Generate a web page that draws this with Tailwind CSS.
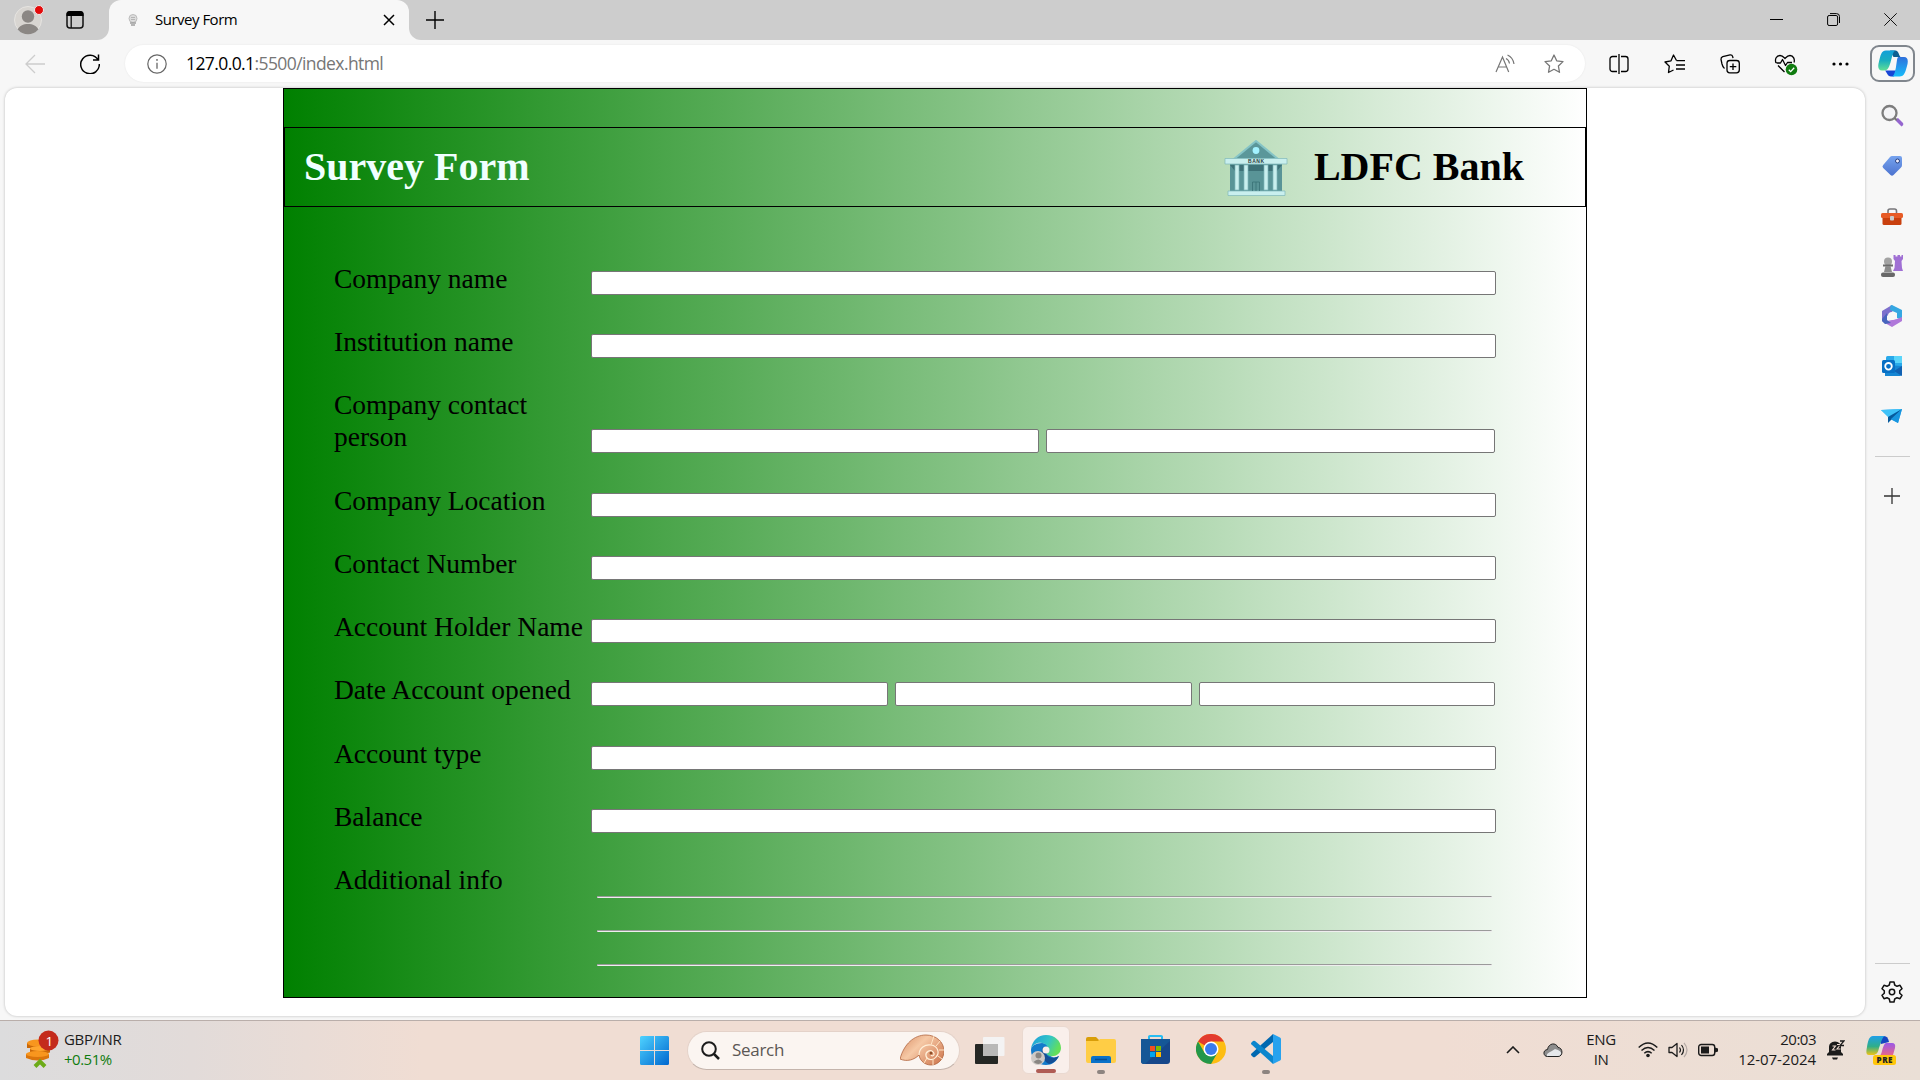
<!DOCTYPE html>
<html lang="en">
<head>
<meta charset="utf-8">
<title>Survey Form</title>
<script src="https://cdn.jsdelivr.net/npm/@tailwindcss/browser@4"></script>
</head>
<body class="w-[1920px] h-[1080px] overflow-hidden flex flex-col bg-[#f7f7f7] font-['Open_Sans',sans-serif] text-black">

<!-- Tab strip -->
<header class="h-10 shrink-0 bg-[#cdcdcd] flex items-stretch">
  <div class="w-[109px] flex items-center bg-[#f7f7f7]">
    <div class="h-10 w-full bg-[#cdcdcd] rounded-br-[12px] flex items-center pl-3.5">
      <svg class="w-8 h-8" viewBox="0 0 32 32"><circle cx="14" cy="16" r="13.5" fill="#d8d5d1" stroke="#e6e4e1"/><circle cx="14" cy="12.5" r="6.2" fill="#8b8784"/><path d="M3.7 25.5C6 18 22 18 24.300 25.500A13.500 13.500 0 0 1 3.700 25.500z" fill="#8b8784"/><circle cx="25" cy="6" r="4.500" fill="#e30b0b" stroke="#efe9e9"/></svg>
      <svg class="w-5 h-5 ml-[19px]" viewBox="0 0 20 20"><rect x="2" y="2" width="16" height="16" rx="3" fill="none" stroke="#111" stroke-width="1.5"/><path d="M1.500 6V4a3 3 0 0 1 3-3h11a3 3 0 0 1 3 3v2z" fill="#000"/><path d="M6.200 6v12" stroke="#111" stroke-width="1.300"/></svg>
    </div>
  </div>
  <div class="w-[300px] bg-[#cdcdcd]">
    <div class="h-10 w-full bg-[#f7f7f7] rounded-t-[12px] flex items-center pl-[19px] pr-[14px]">
      <svg class="w-[10px] h-3" viewBox="0 0 10 12"><circle cx="5" cy="4.500" r="4" fill="#ddd" stroke="#bcbcbc"/><path d="M3 3.500h4M3 5.500h4" stroke="#b5b5b5"/><path d="M2 9h6M3 11h4" stroke="#a0a0a0" stroke-width="1.300"/></svg>
      <span class="ml-[17px] pb-0.5 text-[15px] leading-5 tracking-[-0.5px] grow">Survey Form</span>
      <svg class="w-3 h-3" viewBox="0 0 12 12"><path d="M1 1l10 10M11 1L1 11" stroke="#000" stroke-width="1.500"/></svg>
    </div>
  </div>
  <div class="grow bg-[#f7f7f7]">
    <div class="h-10 w-full bg-[#cdcdcd] rounded-bl-[12px] flex items-center justify-between pl-[17px] pr-[23px] pb-px">
      <svg class="w-[18px] h-[18px]" viewBox="0 0 18 18"><path d="M9 0v18M0 9h18" stroke="#000" stroke-width="1.400"/></svg>
      <div class="flex items-center gap-11">
        <svg class="w-[13px] h-[13px]" viewBox="0 0 13 13"><path d="M0 6.500h13" stroke="#000"/></svg>
        <svg class="w-[13px] h-[13px]" viewBox="0 0 13 13"><rect x=".6" y="2.500" width="10" height="10" rx="1.500" fill="none" stroke="#000"/><path d="M3 .6h6.500a3 3 0 0 1 3 3V10" fill="none" stroke="#000"/></svg>
        <svg class="w-[13px] h-[13px]" viewBox="0 0 13 13"><path d="M.3.300l12.400 12.400M12.700.300L.300 12.700" stroke="#111"/></svg>
      </div>
    </div>
  </div>
</header>

<!-- Address bar -->
<nav class="h-12 shrink-0 flex items-center pl-[25px] pr-[5px] pb-px">
  <svg class="w-5 h-5" viewBox="0 0 20 20"><path d="M20 10H1M10 1L1 10l9 9" fill="none" stroke="#cdcdcd" stroke-width="1.300"/></svg>
  <svg class="w-5 h-5 ml-[35px]" viewBox="0 0 20 20"><path d="M18 5.700A9.300 9.300 0 1 0 19.300 10M18.500.500v5.500H13" fill="none" stroke="#000" stroke-width="1.500"/></svg>
  <div class="ml-[25px] w-[1460px] h-[37px] rounded-full bg-white flex items-center pl-[22px] pr-[21px] shadow-[0_0_2px_rgba(0,0,0,0.08)]">
    <svg class="w-5 h-5" viewBox="0 0 20 20"><circle cx="10" cy="10" r="9.200" fill="none" stroke="#666" stroke-width="1.200"/><path d="M10 8.700v6" stroke="#666" stroke-width="1.300"/><circle cx="10" cy="5.900" r=".9" fill="#666"/></svg>
    <span class="ml-[19px] pb-px text-[17.500px] leading-6 tracking-[-0.59px] grow text-[#767676]"><span class="text-black">127.0.0.1</span>:5500/index.html</span>
    <svg class="w-5 h-5" viewBox="0 0 20 20"><path d="M1 18L7.500 3l6.200 15M3.300 13h8.500" fill="none" stroke="#767676" stroke-width="1.200"/><path d="M11 4.500q3 1.500 3.500 5M12.500 1q5.500 2.500 6.500 9" fill="none" stroke="#767676" stroke-width="1.200"/></svg>
    <svg class="w-5 h-5 ml-[29px]" viewBox="0 0 20 20"><path d="M10 1l2.700 5.800 6.300.8-4.600 4.400 1.100 6.300L10 15.300l-5.500 3 1.100-6.300L1 7.600l6.300-.8z" fill="none" stroke="#767676" stroke-width="1.300" stroke-linejoin="round"/></svg>
  </div>
  <svg class="w-5 h-5 ml-[24px]" viewBox="0 0 20 20"><path d="M8 2.500H3.500a2.500 2.500 0 0 0-2.500 2.500v10a2.500 2.500 0 0 0 2.500 2.500H8M12 2.500h4.500a2.500 2.500 0 0 1 2.500 2.500v10a2.500 2.500 0 0 1-2.500 2.500H12M10 0v20" fill="none" stroke="#000" stroke-width="1.300"/></svg>
  <svg class="w-[21px] h-5 ml-[35px]" viewBox="0 0 21 20"><path d="M12.500 6.500L9.500 1 7 6.800 1 8l4.300 4.200L4.500 18.500l5-2.500M12.500 6.700H21M12 11h9M12 15h9" fill="none" stroke="#000" stroke-width="1.300" stroke-linejoin="round"/></svg>
  <svg class="w-5 h-5 ml-[35px]" viewBox="0 0 20 20"><rect x="7" y="6.500" width="12.300" height="12.300" rx="2.800" fill="none" stroke="#000" stroke-width="1.300"/><path d="M13 9.500v6.500M9.800 12.700h6.500M4.500 14.500C3 13.500 2.500 12 2 10L1 5.500Q.800 3.500 2.800 2.700L10 .9q2.200-.2 2.700 1.700l.3 1.500" fill="none" stroke="#000" stroke-width="1.300"/></svg>
  <svg class="w-6 h-5 ml-[34px] overflow-visible" viewBox="0 0 24 20"><path d="M2 9C.500 5 2.500 1.500 6 1.500c2.500 0 4 2 5 3 1-1 2.500-3 5-3 3.500 0 5 4 4 7M2.500 9h4l2-3.500 3 6 2-3h4.500M4 11.500l6.500 6.500" fill="none" stroke="#000" stroke-width="1.300" stroke-linejoin="round"/><circle cx="17.500" cy="15.500" r="5.800" fill="#107c10"/><path d="M14.800 15.700l1.900 1.900 3.500-3.800" fill="none" stroke="#fff" stroke-width="1.300"/></svg>
  <svg class="w-[17px] h-5 ml-[34px]" viewBox="0 0 17 20"><g fill="#000"><circle cx="2" cy="10" r="1.600"/><circle cx="8.500" cy="10" r="1.600"/><circle cx="15" cy="10" r="1.600"/></g></svg>
  <div class="ml-auto w-[45px] h-[37px] rounded-[9px] border-2 border-[#80868d] flex items-center justify-center">
    <svg class="w-[30px] h-[27px]" viewBox="0 0 30 27"><defs><linearGradient id="cl" x1="0" y1="0" x2="0" y2="1"><stop stop-color="#119fd9"/><stop offset=".5" stop-color="#19aebf"/><stop offset="1" stop-color="#60df95"/></linearGradient><linearGradient id="cr" x1="0" y1="0" x2="0" y2="1"><stop stop-color="#2f70db"/><stop offset="1" stop-color="#18bdfb"/></linearGradient></defs><path d="M7 20.500h12l-3 6h-3c-3 0-3.500-3-6-6z" fill="#1746d5"/><path d="M12 .5h5.500c3 0 3 4 5 6.500h-7z" fill="#0d5f91"/><path d="M8 .5h9.500c-2.500 1-3 5-4.500 10-1.500 6-3 10-6.500 10H4c-4 0-4.500-4-3-9C2.500 6 3 .5 8 .5z" fill="url(#cl)"/><path d="M20.500 7H26c4 0 4.500 4 3 9-1.500 5.500-2.500 10.500-7.500 10.500H14c2.500-1 3-5 4-9.500C19 11 19 7 20.500 7z" fill="url(#cr)"/></svg>
  </div>
</nav>

<div class="h-[932px] shrink-0 flex pl-[5px]">
  <!-- Page viewport -->
  <main class="w-[1860px] h-[928px] rounded-[12px] bg-white shadow-[0_0_3px_rgba(0,0,0,0.25)] pl-[278px]">
    <form class="w-[1304px] h-[910px] border border-black bg-[linear-gradient(to_right,#008000,#ffffff)] font-['Liberation_Serif',serif]">
      <div class="mt-[38px] h-20 border border-black flex items-center pl-[19px] pr-[61px] text-[40px] font-bold leading-none">
        <h1 class="text-[#f0ffff] grow">Survey Form</h1>
        <svg class="w-16 h-14 mt-px" viewBox="0 0 64 56"><path d="M10 19L32 1l22 18z" fill="#5b979a" stroke="#85c4c6" stroke-width="2"/><circle cx="32" cy="10.500" r="3.400" fill="#a3f2ff"/><path d="M6 24h52v28H6z" fill="#599497"/><path d="M6 25h52l-5 6H11z" fill="#3d7177"/><g fill="#c9efee" stroke="#80b8ba" stroke-width=".7"><path d="M11 25h4v25h-4zM20 25h4v25h-4zM40 25h4v25h-4zM49 25h4v25h-4z"/><path d="M1 18.500h62V24H1z"/><path d="M4 51h57v4.500H4z"/></g><path d="M28.500 51V42h7v9M32 42v9" fill="none" stroke="#397176" stroke-width=".8"/><text x="24" y="23.200" font-family="Liberation Sans, sans-serif" font-size="5" font-weight="bold" textLength="16" fill="#293c40">BANK</text></svg>
        <h2 class="ml-[26px]">LDFC Bank</h2>
      </div>
      <div class="mt-14 ml-[50px] w-[1162px] grid grid-cols-[257px_905px] grid-rows-[63px_63px_96px_63px_63px_63px_64px_63px_63px_100px] text-[27.500px] leading-8">
        <label>Company name</label><div class="pt-2"><input class="block w-full h-6 bg-white border border-[#767676] rounded-[2px]"></div>
        <label>Institution name</label><div class="pt-2"><input class="block w-full h-6 bg-white border border-[#767676] rounded-[2px]"></div>
        <label>Company contact<br>person</label><div class="pt-10 flex gap-[7px] pr-px"><input class="w-[448px] h-6 bg-white border border-[#767676] rounded-[2px]"><input class="w-[449px] h-6 bg-white border border-[#767676] rounded-[2px]"></div>
        <label>Company Location</label><div class="pt-2"><input class="block w-full h-6 bg-white border border-[#767676] rounded-[2px]"></div>
        <label>Contact Number</label><div class="pt-2"><input class="block w-full h-6 bg-white border border-[#767676] rounded-[2px]"></div>
        <label>Account Holder Name</label><div class="pt-2"><input class="block w-full h-6 bg-white border border-[#767676] rounded-[2px]"></div>
        <label>Date Account opened</label><div class="pt-2 flex gap-[7px] pr-px"><input class="w-[297px] h-6 bg-white border border-[#767676] rounded-[2px]"><input class="w-[297px] h-6 bg-white border border-[#767676] rounded-[2px]"><input class="w-[296px] h-6 bg-white border border-[#767676] rounded-[2px]"></div>
        <label>Account type</label><div class="pt-2"><input class="block w-full h-6 bg-white border border-[#767676] rounded-[2px]"></div>
        <label>Balance</label><div class="pt-2"><input class="block w-full h-6 bg-white border border-[#767676] rounded-[2px]"></div>
        <label>Additional info</label>
        <div class="pt-8 pl-1.5 pr-1 flex flex-col gap-8">
          <hr class="h-0.5 border border-t-[#9a9a9a] border-l-[#9a9a9a] border-b-[#eeeeee] border-r-[#eeeeee]">
          <hr class="h-0.5 border border-t-[#9a9a9a] border-l-[#9a9a9a] border-b-[#eeeeee] border-r-[#eeeeee]">
          <hr class="h-0.5 border border-t-[#9a9a9a] border-l-[#9a9a9a] border-b-[#eeeeee] border-r-[#eeeeee]">
        </div>
      </div>
    </form>
  </main>

  <!-- Sidebar -->
  <aside class="grow flex flex-col items-center pt-4 pr-px">
    <div class="flex flex-col items-center gap-[26px]">
      <svg class="w-6 h-6" viewBox="0 0 24 24"><path d="M16 15l2-1 5 5q1 2-1.500 3.500L16 17z" fill="#9566cf"/><circle cx="9.500" cy="9" r="7" fill="#f4f4f6" stroke="#7d7d7d" stroke-width="2.300"/><path d="M14.500 14l2.200 2.200" stroke="#777" stroke-width="2"/></svg>
      <svg class="w-6 h-6" viewBox="0 0 24 24"><defs><linearGradient id="tg" x1="0" y1="0" x2="0" y2="1"><stop stop-color="#76a3ee"/><stop offset="1" stop-color="#4c73cf"/></linearGradient></defs><path d="M12 2h8q2 0 2 2v7q0 1.500-1 2.500l-7.500 7.500q-1.500 1.500-3 0l-7.300-7q-1.500-1.500 0-3L10 3q1-1 2-1z" fill="url(#tg)"/><circle cx="17.500" cy="7" r="2" fill="#eef" stroke="#27407e"/></svg>
      <svg class="w-6 h-6" viewBox="0 0 24 24"><path d="M8 10V7q0-2 2-2h4.500q2 0 2 2v3" fill="none" stroke="#77767a" stroke-width="1.600"/><rect x="1" y="9" width="22" height="5" rx="1.500" fill="#e75b26"/><path d="M2.500 14h19v5.500q0 1.500-1.500 1.500H4q-1.500 0-1.500-1.500z" fill="#c9400e"/><rect x="10" y="12" width="4" height="4.500" rx="1" fill="#cbcbcb"/></svg>
      <svg class="w-6 h-6" viewBox="0 0 24 24"><path d="M13.500 1h2v1.500h2V1h2.500v1.500h1.500V1H23v4l-1.500 2 .5 7 1 3h-10l1.500-3 .5-7-1.500-2z" fill="#a070d4"/><circle cx="8" cy="7.500" r="4" fill="#a3a3a3"/><path d="M3 10.500h10v2H3z" fill="#6c6c6c"/><path d="M5.500 12h5l1.500 6H4z" fill="#8b8b8b"/><rect x="1" y="18.500" width="14" height="4.500" rx="2" fill="#686868"/></svg>
      <svg class="w-6 h-6" viewBox="0 0 24 24"><path d="M12 1L2 7v10l4 3 1-8 7-6z" fill="#7d70cd"/><path d="M12 1l10 5v10l-5-2V9l-7-3 .5-4.500z" fill="#35a7e2"/><path d="M22 13v4l-10 6-8-4.500 3-1.500 10-2z" fill="#b078da"/><path d="M2 15v2l3 3 6-1-4-3V9z" fill="#4865bd"/><circle cx="12" cy="12" r="4" fill="#f7f7f7"/></svg>
      <svg class="w-6 h-6" viewBox="0 0 24 24"><rect x="6" y="2" width="16" height="12" rx="1.500" fill="#29a9ea"/><path d="M14 2h8v7h-8z" fill="#5ad5fa"/><path d="M5 11l17 1v8q0 2-2 2H5z" fill="#1686d3"/><path d="M22 12l-8 5 8 5z" fill="#1161b2"/><rect x="2" y="6" width="13" height="13" rx="1.500" fill="#0870c5"/><circle cx="8.500" cy="12.300" r="3.300" fill="none" stroke="#fff" stroke-width="1.800"/></svg>
      <svg class="w-6 h-6" viewBox="0 0 24 24"><path d="M1 6l21-1-4 14-6-3z" fill="#26a6ee"/><path d="M1 6l21-1-14 8z" fill="#3fc2f8"/><path d="M22 5L8 13v6l3.500-3.500z" fill="#075a9c"/><path d="M22 5L11 15l7 4z" fill="#1895df"/></svg>
    </div>
    <div class="mt-7 w-[35px] h-px bg-[#cccccc]"></div>
    <svg class="mt-[31px] w-4 h-4" viewBox="0 0 16 16"><path d="M8 0v16M0 8h16" stroke="#333" stroke-width="1.300"/></svg>
    <div class="mt-auto w-[35px] h-px bg-[#cccccc]"></div>
    <svg class="mt-[17px] mb-[17px] w-[22px] h-[22px]" viewBox="0 0 22 22"><path d="M9 1h4l.7 3 2.300 1.300 3-1 2 3.400-2.300 2v2.600l2.300 2-2 3.400-3-1-2.300 1.300-.7 3H9l-.7-3L6 16.700l-3 1-2-3.400 2.300-2V9.700l-2.300-2L3 4.300l3 1L8.300 4z" fill="none" stroke="#111" stroke-width="1.500" stroke-linejoin="round"/><circle cx="11" cy="11" r="2.700" fill="none" stroke="#111" stroke-width="1.500"/></svg>
  </aside>
</div>

<!-- Taskbar -->
<footer class="h-[60px] shrink-0 border-t border-[#b9aeaa] bg-[linear-gradient(to_right,#dcdcdd,#e2dbd9_10%,#f0ddd3_22%,#f0ddd3_75%,#eadfd6)] flex items-center pb-px">
  <div class="w-[627px] flex items-center pl-[25px]">
    <svg class="w-9 h-10" viewBox="0 0 36 40"><path d="M2 13h22v5H2z" fill="#ca6808"/><ellipse cx="13" cy="13" rx="11" ry="3.500" fill="#f8961e"/><path d="M5 18.500h20v4q-10 3-20 0z" fill="#ca6808"/><ellipse cx="15" cy="18.500" rx="10" ry="2.500" fill="#ffa52e"/><path d="M1 24h23v4q-11 5-23 0z" fill="#db750c"/><ellipse cx="12.500" cy="24" rx="11.500" ry="3" fill="#f8961e"/><path d="M10 36.500l5-5 5 5" fill="none" stroke="#6cab18" stroke-width="4"/><circle cx="23.500" cy="10.500" r="10" fill="#c42b1c"/><text x="20.500" y="15.500" font-family="Open Sans, sans-serif" font-size="13.500" fill="#fff">1</text></svg>
    <div class="ml-[3px] pb-[3px] text-[15px] leading-5 tracking-[-0.35px] text-[#1b1b1b]">
      <div>GBP/INR</div>
      <div class="text-[#107c10] tracking-[-0.5px]">+0.51%</div>
    </div>
  </div>
  <div class="w-[60px] flex items-center pl-[13px]">
    <svg class="w-[29px] h-[29px]" viewBox="0 0 29 29"><defs><linearGradient id="wn" x1="0" y1="0" x2="1" y2="1"><stop stop-color="#4fd3ff"/><stop offset="1" stop-color="#0067cf"/></linearGradient></defs><path d="M1.500 0H14v14H0V1.500Q0 0 1.500 0zM15 0h12.500Q29 0 29 1.500V14H15zM0 15h14v14H1.500Q0 29 0 27.500zM15 15h14v12.500q0 1.500-1.500 1.500H15z" fill="url(#wn)"/></svg>
  </div>
  <div class="w-[273px] h-[39px] rounded-full bg-[#fbf5f1] border border-[#e4d2c9] border-b-[#c4b4ac] flex items-center pl-[13px] pr-[15px]">
    <svg class="w-[19px] h-[19px]" viewBox="0 0 19 19"><circle cx="8" cy="8" r="6.800" fill="none" stroke="#1b1b1b" stroke-width="2"/><path d="M13 13l5 5" stroke="#1b1b1b" stroke-width="2.500"/></svg>
    <span class="ml-3 text-[17px] leading-6 tracking-[-0.3px] text-[#5b5754] grow">Search</span>
    <svg class="w-11 h-8" viewBox="0 0 44 32"><defs><linearGradient id="sh" x1="0" y1="0" x2="1" y2=".7"><stop stop-color="#d88b62"/><stop offset=".45" stop-color="#f6c9a6"/><stop offset="1" stop-color="#d4825a"/></linearGradient></defs><path d="M0 25C4 10 14 1 26 1c10 0 18 7 18 16 0 8-6 14-13 14-6 0-11-4-12-10-5 5-12 7-19 4z" fill="url(#sh)" stroke="#b0633c" stroke-width=".8"/><path d="M19 21c0-7 6-11 12-10 7 1 9 8 5 12-3 4-9 3-10-1s4-7 7-4-1 5-2 3" fill="none" stroke="#fff0d9" stroke-width="1.200"/><path d="M31 11l3-9M36 12l5-6M39 16h5M38 22l4 3M33 25v6M27 24l-3 5" stroke="#ffe4c4" stroke-width="1"/><circle cx="31" cy="19" r="1.500" fill="#8f4e27"/></svg>
  </div>
  <div class="flex items-center pl-0.5">
    <div class="w-[55px] h-12 flex justify-center pt-2.5"><svg class="w-[30px] h-[29px]" viewBox="0 0 30 29"><rect y="8" width="23" height="20" rx="1" fill="#252724"/><rect x="8" y="1" width="21.500" height="19" rx="1" fill="#f4f3f3"/><path d="M8 8h15v12H8z" fill="#b9b8b7"/></svg></div>
    <div class="w-[56px] flex justify-center pl-px"><div class="w-12 h-12 rounded-md bg-[#f9efeb] border border-[#ead9d0] flex flex-col items-center justify-between pt-2">
      <svg class="w-[30px] h-[30px]" viewBox="0 0 30 30"><defs><linearGradient id="eg" x1="0" y1="0" x2="1" y2=".4"><stop stop-color="#1b9bdd"/><stop offset=".6" stop-color="#33c5c5"/><stop offset="1" stop-color="#63df5a"/></linearGradient></defs><path d="M0 15c0-4 5-7 11-7 5 0 9 4 8 8-1 3-1 4 2 6 2 1 5 0 7-1-3 6-7 9-13 9C7 30 0 24 0 15z" fill="#137bcb"/><path d="M12 12c-3 5-1 14 6 17 5-1 8-4 10-8-5 3-11 2-13-2-1-3-1-5-3-7z" fill="#144f96"/><path d="M0 14C1 6 7 0 15 0c9 0 15 6 15 13 0 6-6 9-11 8-3-1-4-2-3-4 2-3 1-8-5-9C6 7 2 10 0 14z" fill="url(#eg)"/><circle cx="15" cy="15" r="3.500" fill="#f9efeb"/><circle cx="7" cy="23" r="7" fill="#cfcac6"/><circle cx="7.500" cy="20.500" r="3" fill="#8a8682"/><path d="M2.500 27q5-5 9 0-4 4-9 0z" fill="#8a8682"/></svg>
      <div class="w-5 h-1 rounded-full bg-[#b05c54]"></div>
    </div></div>
    <div class="w-[55px] h-12 flex flex-col items-center justify-between pt-2.5"><svg class="w-[30px] h-7" viewBox="0 0 30 28"><path d="M0 3q0-2 2-2h8l3 3v8H0z" fill="#d99e09"/><path d="M0 5h12l2-2h14q2 0 2 2v20q0 2-2 2H2q-2 0-2-2z" fill="#ffcd45"/><path d="M5 27v-5q0-2 2-2h16q2 0 2 2v5z" fill="#0a72c9"/><path d="M9 23.500h12" stroke="#064f94" stroke-width="1.500"/></svg><div class="w-2 h-1 rounded-full bg-[#8d8480]"></div></div>
    <div class="w-[55px] h-12 flex justify-center pt-2"><svg class="w-[29px] h-[30px]" viewBox="0 0 29 30"><path d="M8 6V2.500Q8 2 9 2h11q1 0 1 .5V6" fill="none" stroke="#28bdf2" stroke-width="2"/><path d="M0 5h29v22q0 3-3 3H3q-3 0-3-3z" fill="#16478a"/><path d="M0 5h29v2L4 30H3q-3 0-3-3z" fill="#155796"/><path d="M9 12h5v5H9z" fill="#f25022"/><path d="M15 12h5v5h-5z" fill="#7fba00"/><path d="M9 18h5v5H9z" fill="#00a4ef"/><path d="M15 18h5v5h-5z" fill="#ffb900"/></svg></div>
    <div class="w-[55px] h-12 flex justify-center pt-2"><svg class="w-[30px] h-[30px]" viewBox="0 0 30 30"><circle cx="15" cy="15" r="15" fill="#fdbd12"/><path d="M15 15L2 7.500A15 15 0 0 1 28 7.500H15z" fill="#e33b2e"/><path d="M2 7.500A15 15 0 0 0 15 30l6.500-11.200L15 15 8.500 18.700z" fill="#23974a"/><circle cx="15" cy="15" r="7.500" fill="#fff"/><circle cx="15" cy="15" r="6" fill="#3a7bec"/></svg></div>
    <div class="w-[55px] h-12 flex flex-col items-center justify-between pt-2"><svg class="w-[30px] h-[30px]" viewBox="0 0 30 30"><path d="M22 0l7 3.500q1 .5 1 1.500v20q0 1-1 1.500L22 30z" fill="#27a2ee"/><path d="M22 0v8L4 23q-1 .7-2 0l-1.500-1.400q-1-1 0-2z" fill="#0068b0"/><path d="M22 30v-8L4 7q-1-.7-2 0L.5 8.400q-1 1 0 2z" fill="#0b86cd"/></svg><div class="w-2 h-1 rounded-full bg-[#8d8480]"></div></div>
  </div>
  <div class="ml-auto flex items-center pr-[24px] text-[15px] leading-5 text-[#1b1b1b]">
    <svg class="w-[14px] h-2" viewBox="0 0 14 8"><path d="M1 7l6-6 6 6" fill="none" stroke="#1b1b1b" stroke-width="1.600"/></svg>
    <svg class="ml-[23px] w-5 h-4" viewBox="0 0 20 16"><path d="M4.500 14.500C0 14.500-.5 8 4.500 7.500 5.500 1 13 0 15 5.500c5 0 5.500 9 0 9z" fill="#8d8d8d" stroke="#222"/><path d="M4 14C3 11 8 10 12 7q7 2 6 5-1 2-3 2z" fill="#e5e7ea"/></svg>
    <div class="ml-[23px] w-[30px] pb-0.5 text-center tracking-[-0.4px]"><div>ENG</div><div>IN</div></div>
    <svg class="ml-[22px] w-5 h-4" viewBox="0 0 20 16"><path d="M.7 5.500q9.300-9 18.600 0M3.500 8.500q6.500-6 13 0M6.300 11.300q3.700-3.300 7.400 0" fill="none" stroke="#1b1b1b" stroke-width="1.500"/><circle cx="10" cy="13.500" r="1.800" fill="#1b1b1b"/></svg>
    <svg class="ml-2.5 w-5 h-4" viewBox="0 0 20 16"><path d="M1 5.500h3l5-4v13l-5-4H1z" fill="none" stroke="#1b1b1b" stroke-width="1.300" stroke-linejoin="round"/><path d="M11.500 5.500q2 2.500 0 5M13.500 3q4 5 0 10" fill="none" stroke="#1b1b1b" stroke-width="1.200"/><path d="M16 .8q6 7.200 0 14.400" fill="none" stroke="#b5aaa5" stroke-width="1.200"/></svg>
    <svg class="ml-2.5 w-5 h-3.5" viewBox="0 0 20 14"><rect x=".7" y="1.500" width="16" height="11" rx="2.500" fill="none" stroke="#1b1b1b" stroke-width="1.400"/><rect x="3" y="3.500" width="8" height="7" fill="#1b1b1b"/><path d="M17 4.500l3 1v3l-3 1z" fill="#1b1b1b"/></svg>
    <div class="ml-5 w-[78px] pb-[3px] flex flex-col items-end whitespace-nowrap"><div class="tracking-[-0.5px]">20:03</div><div class="tracking-[-0.05px]">12-07-2024</div></div>
    <svg class="ml-[11px] w-[18px] h-5" viewBox="0 0 18 20"><path d="M2 12V7q0-5 6-5.500 6 .5 6 5.500v5l2 2v1.500H0V14z" fill="#1b1b1b"/><path d="M5 17.500h6l-1 2H6z" fill="#1b1b1b"/><path d="M5.500 6h3l-3 4h3M10 4.500h3.500L10 9h3.500" fill="none" stroke="#f0ddd3" stroke-width="1.100"/><path d="M13 1h4l-4 4.500h4" fill="none" stroke="#1b1b1b" stroke-width="1.300"/></svg>
    <svg class="ml-[21px] w-[30px] h-[30px]" viewBox="0 0 30 30"><defs><linearGradient id="pl" x1="0" y1="0" x2="0" y2="1"><stop stop-color="#1f9fe8"/><stop offset=".55" stop-color="#2fae89"/><stop offset="1" stop-color="#f0c414"/></linearGradient><linearGradient id="pr" x1="0" y1="0" x2="0" y2="1"><stop stop-color="#9a58e8"/><stop offset="1" stop-color="#f2697d"/></linearGradient></defs><path d="M12 1h6q4 0 5 6l-8 2z" fill="#1446c0"/><path d="M7 1h12c-3 1-4 7-6 12-1 5-3 7-6 7H3c-3 0-3-3-2-8C2 6 3 1 7 1z" fill="url(#pl)"/><path d="M20 8h6q4 0 3 5l-2 7q-1 2-4 2H12q3-1 4-6 2-8 4-8z" fill="url(#pr)"/><rect x="7" y="20" width="23" height="10" rx="2.500" fill="#ffc60b"/><text x="10.500" y="28" font-family="Open Sans, sans-serif" font-size="8" font-weight="800" textLength="16" fill="#222">PRE</text></svg>
  </div>
</footer>
</body>
</html>
